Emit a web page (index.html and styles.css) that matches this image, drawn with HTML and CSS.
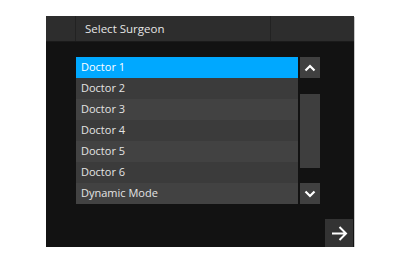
FILE: index.html
```html
<!DOCTYPE html>
<html lang="en">
<head>
  <meta charset="UTF-8" />
  <title>Select Surgeon</title>
  <link rel="stylesheet" href="styles.css">
</head>
<body>

  <div class="panel">
    <!-- header bar -->
    <div class="header">
      <div class="cell"></div>
      <div class="cell title">Select Surgeon</div>
      <div class="cell"></div>
    </div>

    <!-- surgeon list + scroller -->
    <div class="picker">
      <div class="list">
        <div class="row selected">Doctor 1</div>
        <div class="row">Doctor 2</div>
        <div class="row alt">Doctor 3</div>
        <div class="row">Doctor 4</div>
        <div class="row alt">Doctor 5</div>
        <div class="row">Doctor 6</div>
        <div class="row alt">Dynamic Mode</div>
      </div>
      <div class="scroller">
        <div class="scroll-btn">
          <svg width="12" height="8" viewBox="0 0 12 8"><path d="M1.5 6.5 L6 2 L10.5 6.5" fill="none" stroke="#fff" stroke-width="2.2"/></svg>
        </div>
        <div class="thumb"></div>
        <div class="scroll-btn">
          <svg width="12" height="8" viewBox="0 0 12 8"><path d="M1.5 1.5 L6 6 L10.5 1.5" fill="none" stroke="#fff" stroke-width="2.2"/></svg>
        </div>
      </div>
    </div>

    <div class="footer">
      <div class="next-btn">
        <svg width="17" height="15" viewBox="0 0 17 15"><path d="M1 7.5 H15 M8.5 1 L15 7.5 L8.5 14" fill="none" stroke="#fff" stroke-width="2"/></svg>
      </div>
    </div>
  </div>

</body>
</html>
```

FILE: styles.css
```css
body {
  margin: 0;
  background: #ffffff;
  font-family: 'Open Sans', 'Noto Sans', sans-serif;
  color: #e8e8e8;
}

.panel {
  width: 308px;
  height: 231px;
  margin: 16px 0 0 46px;
  background: #121212;
  box-shadow: 1px 1px 0 #c8c8c8;
  display: flex;
  flex-direction: column;
}

.header {
  height: 25px;
  display: grid;
  grid-template-columns: 29px 1fr 83px;
  gap: 1px;
  background: #222;
  border-bottom: 1px solid #1a1a1a;
}

.header .cell {
  background: #2d2d2d;
}

.header .title {
  padding-left: 9px;
  font-size: 11.5px;
  line-height: 25px;
  color: #e6e6e6;
}

.picker {
  display: flex;
  gap: 2px;
  margin: 15px 0 0 30px;
}

.list {
  width: 222px;
  display: flex;
  flex-direction: column;
}

.row {
  height: 21px;
  line-height: 20px;
  padding-left: 5px;
  font-size: 11px;
  background: #3b3b3b;
  color: #e4e4e4;
}

.row.alt {
  background: #424242;
}

.row.selected {
  background: #00a8ff;
  color: #ffffff;
}

.scroller {
  width: 20px;
  display: flex;
  flex-direction: column;
}

.scroll-btn {
  height: 21px;
  background: #404040;
  display: flex;
  align-items: center;
  justify-content: center;
}

.thumb {
  height: 74px;
  margin: 16px 0 15px;
  background: #3e3e3e;
}

.footer {
  margin-top: auto;
  display: flex;
  justify-content: flex-end;
}

.next-btn {
  width: 28px;
  height: 28px;
  background: #333;
  display: flex;
  align-items: center;
  justify-content: center;
  margin-right: 1px;
}
```
